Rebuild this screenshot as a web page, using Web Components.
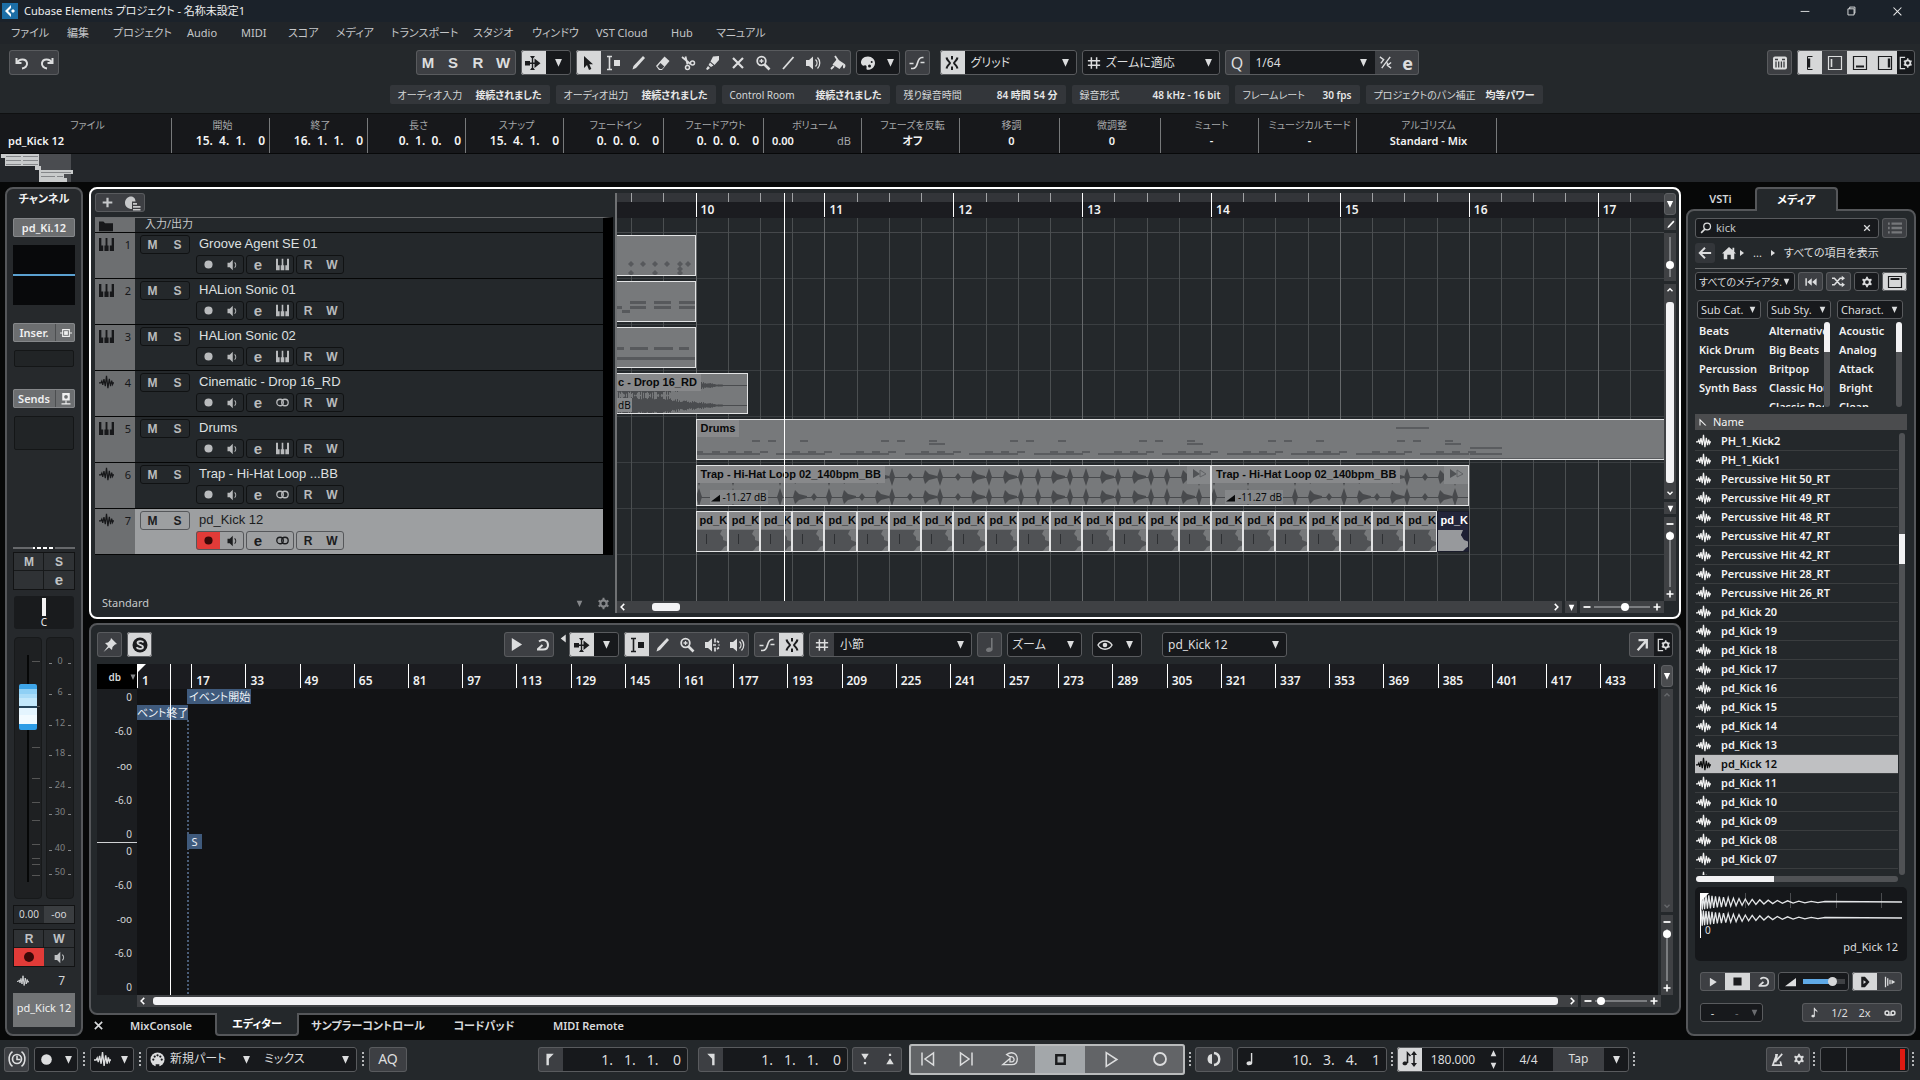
<!DOCTYPE html>
<html lang="ja">
<head>
<meta charset="utf-8">
<title>Cubase Elements プロジェクト - 名称未設定1</title>
<style>
  body {
    margin: 0;
    background: #070808;
    color: #d4d6d8;
    font: 12px/16px "Noto Sans", "Noto Sans CJK JP", sans-serif;
    font-feature-settings: "palt";
  }
</style>
</head>
<body>
<cb-app></cb-app>

<script>
/* Shared by every shadow root */
const BASE = `
  *, *::before, *::after { box-sizing: border-box; }
  :host([hidden]) { display: none; }
  button, input, select { font: inherit; font-feature-settings: inherit; color: inherit; margin: 0; padding: 0; border: 0; background: none; border-radius: 0; }
  button { display: inline-flex; align-items: center; justify-content: center; cursor: default; }
  svg { display: block; flex: none; }
`;

const s = (d, w = 2) => `<path d="${d}" fill="none" stroke="currentColor" stroke-width="${w}"/>`;
const f = (d) => `<path d="${d}" fill="currentColor"/>`;

/* All icons are drawn on a 16 x 16 grid */
const ICONS = {
  logo: `<rect width="16" height="16" fill="#1c6ea6"/><path d="M9 2 3 8l6 6V11L6 8l3-3z" fill="#fff"/><path d="m11 6 2 2-2 2-2-2z" fill="#fff"/>`,
  min: s('M3 8.5h10', 1),
  restore: s('M4.5 5.5h7v7h-7zM6.500 5.500v-2h6v7h-1', 1),
  close: s('m4 4 9 9M13 4l-9 9', 1.2),
  undo: s('M2.500 3v5h5M3 8C5 3.500 12 3 13 8c.5 3-2 5-5 5.500'),
  redo: s('M13.500 3v5h-5M13 8C11 3.500 4 3 3 8c-.5 3 2 5 5 5.500'),
  scroll: f('M0 6h5v4.500H0zM9.500 3.500l6 4.700-6 4.700zM5 1h5l-1.500 2h-2zM5 15h5l-1.500-2h-2z') + s('M7.500 2v12', 1.4) + s('M5 8.200h6', 1.6),
  pointer: f('M4 1v12l3-3 2 5 2.400-1L9.300 9.300H13z'),
  range: s('M2 1.500h5M2 14.500h5M4.500 1.500v13', 1.600) + f('M9 5h6v6H9z'),
  pencil: f('m13 1 2 2-9 10-3.500 1.500L3.500 11z'),
  eraser: f('m9.500 1.500 5 4.500-7.500 9H4L1 11z') + `<path d="m5.500 8 3.800 3.500-2.300 2.500H5L2.500 11.500z" fill="#3d3f43"/>`,
  scissors: s('m2 2 8.500 7M5.500 1.500l2 8', 1.800) + `<circle cx="12.500" cy="8" r="2" fill="none" stroke="currentColor" stroke-width="1.500"/><circle cx="7.500" cy="12.500" r="2" fill="none" stroke="currentColor" stroke-width="1.500"/>`,
  glue: f('M8 1.500 14 1v4l-4.500 5-4-3.500zM5 7.500l3.500 3L6 12l-2.500-2zM3 11l2 2-2.500 2L1 14z'),
  cross: s('m3 3 10 10M13 3 3 13', 2.200),
  zoom: `<circle cx="6.500" cy="6" r="4.300" fill="none" stroke="currentColor" stroke-width="1.800"/>` + s('m9.500 9.500 5 5', 2.600) + s('M4.500 6h4M6.500 4v4', 1.300),
  line: s('M3 14 13.500 2', 1.800),
  speaker: f('M1 5h3l4-3.500v13L4 11H1z') + s('M10.500 4.500c2 2 2 5 0 7M12.500 2.500c3 3 3 8 0 11', 1.300),
  audition: f('M1 5h3l4-3.500v13L4 11H1z') + s('M11 1.500v4M11 10.500v4M9 8h3M13 4l2 1.500M13 12l2-1.500M14.500 8h1', 1.700),
  bucket: f('m7 4 7 4.500-4.500 5.500-7-4.500zM13.500 8.500c2.500 0 2.500 4 .5 5-1.500 0-1-3-.5-5z') + s('m5 1 4 6M1 14l3-3', 1.800),
  palette: f('M8 1.500C3 1.500 1 5 1 7.500S3 11 4.500 10.500 7 11 6.500 13 8 15 10 14.500s5-3 5-6.500-3-6.500-7-6.500z') + `<circle cx="9.500" cy="11" r="1.500" fill="#17191c"/><circle cx="11.700" cy="7" r="1" fill="#17191c"/>`,
  curve: s('M2 13.500h2c6 0 3-11 9-11h1.500M.500 8.500h4M11.500 7.500h4', 1.700),
  snap: s('M8 1v3.500M8 11.500V15', 2) + s('M2.500 2.500c.5 3 3 4 3.500 5.500-.5 1.500-3 2.500-3.500 5.500M13.500 2.500c-.5 3-3 4-3.500 5.500.5 1.500 3 2.500 3.500 5.500', 2),
  grid: s('M1 5.500h14M1 10.500h14M5 1.500v13M11 1.500v13', 1.700),
  down: f('M3 3h10L8 14z'),
  up: f('M3 13h10L8 2z'),
  right: f('M4 2v12l8-6z'),
  left: f('M12 1v14L3 8z'),
  chevUp: s('m4 10 4-4 4 4', 2.200),
  chevDown: s('m4 6 4 4 4-4', 2.200),
  chevLeft: s('m10 3-5 5 5 5', 2.400),
  chevRight: s('m6 3 5 5-5 5', 2.400),
  minus: s('M1 8h14', 3.500),
  plus: s('M1 8h14M8 1v14', 3.200),
  slash: s('m2 2 4 3-3 4M13 2 4 14M10 8v3l4 3M14 8l-4 3', 1.500),
  rack: `<rect x="1" y="1.500" width="14" height="13" rx="2" fill="currentColor"/><path d="M4 6.500v6M6.700 6.500v6M9.400 6.500v6M12 6.500v6M3 4.500h3M10 4.500h3" stroke="#3d3f43" stroke-width="1.300"/>`,
  paneL: s('M10.500 1.500h-5v13h5', 1) + s('M7 3.500v9', 2.400),
  paneL2: s('M1.500 1.500h13v13h-13z', 1.200) + s('M4.500 4v8', 1.600),
  paneB: s('M1.500 1.500h13v13h-13z', 1.200) + s('M4 11.500h8', 2.200),
  paneR: s('M1.500 1.500h13v13h-13z', 1.200) + s('M12 3.500v9', 2.400),
  setup: s('M7 1.500H1.500v13H7', 1.400) + `<circle cx="10" cy="8" r="3" fill="none" stroke="currentColor" stroke-width="2"/>` + s('M10 2.500v2M10 11.500v2M5.500 5.500l2 1M12.500 9.500l2 1M14.500 5.500l-2 1M7.500 9.500l-2 1', 1.600),
  gear: `<circle cx="8" cy="8" r="3.800" fill="none" stroke="currentColor" stroke-width="2.600"/>` + s('M8 1v3M8 12v3M2 4.500l2.500 1.500M11.500 10l2.500 1.500M14 4.500 11.500 6M4.500 10 2 11.500', 2.400),
  folder: f('M0 4h5l2 2h9v9H0z'),
  keys: f('M0 1h2.500v8H4.500v6H0zM7 1h2v8h1.200v6H5.800V9H7zM13.500 1H16v14h-4.500V9h2z'),
  wave: s('M0 8.500h2l1-2 1 4 1.300-6 1.400 7.500L8 1l1.500 13L11 4l1.300 8 1.200-6 1 4 .500-1.500h1', 1.300),
  rec: `<circle cx="8" cy="8" r="5" fill="currentColor"/>`,
  mono: f('M2 5h3l4-4v14l-4-4H2z') + s('M11.500 4.500c2 2 2 5 0 7', 1.400),
  stereo: `<circle cx="5" cy="8" r="4" fill="none" stroke="currentColor" stroke-width="1.600"/><circle cx="11" cy="8" r="4" fill="none" stroke="currentColor" stroke-width="1.600"/>`,
  preset: f('M0 8c0-4 3-6.500 6-6.500 3 0 4.500 2.500 4.500 5H7V14C3 14 0 11.500 0 8zM8 8h4v1.800H8zM8 11h7.500v1.800H8zM8 14h7.500v1.500H8z'),
  insert: s('M3.500 3.500h9v9h-9zM0 8h3M13 8h3', 1.400) + f('M5.500 5.500h5v5h-5z'),
  send: f('M3 0h10v10H3z') + s('M8 10v4M2 14.500h12', 1.500) + `<circle cx="8" cy="5" r="2.500" fill="#6f7173"/>`,
  pin: f('m9 1 6 6-2 .5-2.500 2.500-.5 3L7 10.500 1.500 15 6 9 3 6l3-.5L8.500 3z'),
  solo: `<circle cx="8" cy="8" r="7.500" fill="currentColor"/><path d="M11.500 5.500C10 3.500 5.500 4 5.500 6s5.500 1.700 5.500 4-5 2.500-6.500.3" fill="none" stroke="#d6d7d8" stroke-width="1.800"/>`,
  play: f('M3 1v14L14 8z'),
  playOpen: s('M4 1.500v13L14 8z', 1.500),
  stop: f('M3 3h10v10H3z'),
  stopOpen: s('M3.500 3.500h9v9h-9z', 2.600),
  recOpen: `<circle cx="8" cy="8" r="6" fill="none" stroke="currentColor" stroke-width="1.800"/>`,
  loop: s('M5 4.500c4-3 9-1 9 3.500 0 3-2 4.500-5 4.500H3M8.500 8l-5 4.500', 2),
  loopOpen: s('M5 4c5-3.500 9.500-.5 9.500 4 0 3-2 5-5 5H1.500l6.500-5.500v3h1.500c3.500 0 2.500-5.500-1.500-4.500z', 1.200),
  prev: s('M2 1.500v13M13.500 2v12L5 8z', 1.500),
  next: s('M14 1.500v13M2.500 2v12L11 8z', 1.500),
  note: f('M9 1h1.600v11.500c0 3-6.600 3.500-6.600.5 0-2 3-3 5-2z'),
  note8: f('M7 1h1.500c.5 3 5 3 3.500 7-.5-2-2-2.500-3.500-3v8c0 3-5 2.500-5 .5 0-2 2-2.500 3.500-2z'),
  eye: s('M1 8c3-5.500 11-5.500 14 0-3 5.500-11 5.500-14 0z', 1.500) + `<circle cx="8" cy="8" r="2.300" fill="currentColor"/>`,
  open: s('M4 2.500h9.500V12M13 3 3 14', 2.600),
  search: `<circle cx="9.500" cy="6" r="4.500" fill="none" stroke="currentColor" stroke-width="1.700"/>` + s('m6.500 9.500-5 5', 2.200),
  x: s('m3.500 3.500 9 9M12.500 3.500l-9 9', 2),
  list: s('M4 3h12M4 8h12M4 13h12', 2.600) + s('M0 3h2M0 8h2M0 13h2', 2.600),
  back: s('M15 8H3M8 2 2 8l6 6', 2.200),
  home: f('M8 1 0 8.500h2V15h4v-5h4v5h4V8.500h2l-2-2V2h-2v2.500z'),
  rewind: s('M1.500 3v10', 2) + f('M9 3v10L3 8zM15.500 3v10L9.500 8z'),
  shuffle: s('M0 4h3l7 8h3M0 12h3l7-8h3', 2) + f('m12 1 4 3-4 3zM12 9l4 3-4 3z'),
  panel: s('M1.500 2.500h13v11h-13z', 1.200) + s('M3.500 5h9', 1.800),
  sort: f('M1 1v14h2V6l9 9h3z'),
  ramp: f('M0 15h16V3z'),
  auto: f('M3 1h5l6 7-6 7H3z') + `<path d="M6 5.500v5L9.500 8z" fill="#d6d7d8"/>`,
  beat: s('M2 1v14M5 3v10M8 5v6', 1.700) + f('M10 5v6l5-3z'),
  tape: `<circle cx="4" cy="8" r="2.600" fill="none" stroke="currentColor" stroke-width="2"/><circle cx="12" cy="8" r="2.600" fill="none" stroke="currentColor" stroke-width="2"/>` + s('M4 10.500h8', 2),
  metro: s('M5.500 3h2L6 11M7 3 3 14h9l-1-4M6 10l7-8', 1.800),
  clock: `<circle cx="8" cy="8" r="4" fill="none" stroke="currentColor" stroke-width="1.500"/>` + s('M8 5v3.500h3M4 1.500c-4 3-4 10 0 13M12 1.500c4 3 4 10 0 13', 1.400),
  midi: `<circle cx="8" cy="8" r="7.500" fill="currentColor"/><g fill="#17191c"><circle cx="3.500" cy="8" r="1.200"/><circle cx="5" cy="4.800" r="1.200"/><circle cx="8" cy="3.500" r="1.200"/><circle cx="11" cy="4.800" r="1.200"/><circle cx="12.500" cy="8" r="1.200"/><path d="M6 13h4v3H6z"/></g>`,
  locL: f('M3 1h9L6 7v8H3z'),
  locR: f('M13 1H4l6 6v8h3z'),
  markL: f('M3 1h10L8 9zM6.500 12h3v3h-3z'),
  markR: f('M3 15h10L8 7zM6.500 1h3v3h-3z'),
  sync: f('M6 3v10c-6 0-6-10 0-10z') + s('M8 2c7 1 7 11 0 12', 2.400),
  tempo: s('M5.500 12V2l3 3M12 3v11', 1.600) + f('M5.500 12c0 3-5 3-5 .5S4 10 5.500 11zM12 0l3 4H9zM12 16l3-4H9z')
};

const icon = (name, size = 16) =>
  `<svg width="${size}" height="${size}" viewBox="0 0 16 16" aria-hidden="true">${ICONS[name]}</svg>`;

class Part extends HTMLElement {
  connectedCallback() {
    if (this.shadowRoot) return;
    this.attachShadow({ mode: 'open' });
    this.shadowRoot.innerHTML = `<style>${BASE}${this.css()}</style>${this.html()}`;
  }
  attr(name, fallback = '') { return this.getAttribute(name) ?? fallback; }
  css() { return ':host { display: block; }'; }
  html() { return '<slot></slot>'; }
}

// -- small controls --
class CbButton extends Part {
  css() {
    return `
      :host { display: flex; flex: none; width: ${this.attr('w', '25')}px; }
      button { flex: 1; color: inherit; min-width: 0; }
      :host([on]) button { background: var(--on-bg, #d6d7d8); color: #1b1c1e; }
      :host([dark]) button { background: #17191c; }
      :host([rec]) button { background: #e23b38; color: #3a0908; }
      :host([off]) button { color: #75777a; }
    `;
  }
  html() {
    const i = this.attr('icon');
    return `<button type="button" aria-label="${this.attr('label')}">${i ? icon(i, this.attr('size', '16')) : '<slot></slot>'}</button>`;
  }
}
customElements.define('cb-button', CbButton);

class CbGroup extends Part {
  css() {
    return `
      :host { display: flex; flex: none; align-items: stretch; height: var(--group-h, 25px); overflow: hidden;
        background: #3d3f43; border-radius: 3px; outline: 1px solid #595b5e; outline-offset: -1px; }
      :host([field]) { background: #17191c; }
    `;
  }
}
customElements.define('cb-group', CbGroup);

class CbSelect extends Part {
  css() {
    return `
      :host { display: grid; flex: none; width: ${this.attr('w', '100')}px; align-items: center; background: #17191c; min-width: 0; }
      :host([fill]) { width: auto; flex: 1; }
      select, svg { grid-area: 1 / 1; }
      select { appearance: none; width: 100%; min-width: 0; height: 100%; padding: 0 12px 0 ${this.attr('pad', '8')}px; }
      svg { justify-self: end; margin-right: ${this.attr('end', '6')}px; pointer-events: none; }
      :host([off]) { color: #6a6c6f; }
    `;
  }
  html() {
    const v = this.attr('value');
    return `<select aria-label="${this.attr('label')}"><option>${v}</option></select>${icon('down', this.attr('size', '11'))}`;
  }
}
customElements.define('cb-select', CbSelect);

class CbGrip extends Part {
  css() { return ':host { display: block; flex: none; width: 2px; height: 14px; background: repeating-linear-gradient(#b5b7b9 0 2px, transparent 2px 4px); }'; }
  html() { return ''; }
}
customElements.define('cb-grip', CbGrip);

class CbScroll extends Part {
  css() {
    const [a, b, c] = this.attr('parts', '0 1 0').split(' ');
    return `
      :host { display: flex; align-items: center; gap: 4px; background: #3f4144; color: #fff; min-width: 0; min-height: 0; height: 12px; }
      :host([vertical]) { flex-direction: column; height: auto; width: 12px; }
      :host([dim]) { color: #66686b; }
      .track { flex: 1; align-self: stretch; display: flex; flex-direction: inherit; padding: 2px 0; }
      :host([vertical]) .track { padding: 0 2px; }
      .track::before { content: ""; flex: ${a}; }
      .thumb { flex: ${b}; background: #f2f2f4; border-radius: 3px; }
      .track::after { content: ""; flex: ${c}; }
      :host([dim]) .thumb { visibility: hidden; }
      button { width: 12px; height: 12px; }
    `;
  }
  html() {
    const v = this.hasAttribute('vertical');
    return `
      <button type="button" aria-label="戻る">${icon(v ? 'chevUp' : 'chevLeft', 10)}</button>
      <div class="track"><div class="thumb"></div></div>
      <button type="button" aria-label="進む">${icon(v ? 'chevDown' : 'chevRight', 10)}</button>`;
  }
}
customElements.define('cb-scroll', CbScroll);

class CbZoom extends Part {
  css() {
    return `
      :host { display: flex; align-items: center; justify-content: space-between; gap: 2px; padding: 0 2px; width: 84px; height: 12px; background: #3f4144; color: #fff; }
      :host([vertical]) { flex-direction: column; width: 12px; height: 84px; padding: 2px 0; }
      :host([bare]) { height: 48px; padding: 4px 0; }
      :host([bare]) button { display: none; }
      button { width: 10px; height: 10px; }
      input { appearance: none; flex: 1; min-width: 0; min-height: 0; width: 100%; height: 8px; }
      :host([vertical]) input { writing-mode: vertical-lr; width: 8px; height: 100%; }
      input::-webkit-slider-runnable-track { background: linear-gradient(#7b7d80, #7b7d80) center / 100% 2px no-repeat; }
      :host([vertical]) input::-webkit-slider-runnable-track { background-size: 2px 100%; }
      input::-webkit-slider-thumb { appearance: none; width: 8px; height: 8px; border-radius: 50%; background: #fff; }
    `;
  }
  html() {
    return `
      <button type="button" aria-label="縮小">${icon('minus', 8)}</button>
      <input type="range" aria-label="${this.attr('label', 'ズーム')}" min="0" max="100" value="${this.attr('value', '50')}">
      <button type="button" aria-label="拡大">${icon('plus', 8)}</button>`;
  }
}
customElements.define('cb-zoom', CbZoom);

// -- window header --
class CbTitle extends Part {
  css() {
    return `
      :host { display: flex; align-items: center; height: 22px; padding-left: 2px; background: #1b222a; color: #eceded; font-size: 11px; }
      h1 { flex: 1; margin: 0 0 0 6px; font: inherit; }
      button { width: 46px; height: 22px; }
    `;
  }
  html() {
    return `${icon('logo')}<h1>Cubase Elements プロジェクト - 名称未設定1</h1>
      <button type="button" aria-label="最小化">${icon('min', 14)}</button>
      <button type="button" aria-label="元に戻す">${icon('restore', 14)}</button>
      <button type="button" aria-label="閉じる">${icon('close', 14)}</button>`;
  }
}
customElements.define('cb-title', CbTitle);

class CbMenu extends Part {
  css() {
    return `
      :host { display: block; background: #212529; }
      nav { display: grid; grid-template-columns: 56px 46px 74px 54px 47px 48px 55px 82px 59px 64px 75px 45px auto; align-items: center; height: 22px; padding-left: 11px; font-size: 11px; }
      a { color: #c4c6c8; text-decoration: none; white-space: nowrap; }
    `;
  }
  html() {
    const items = ['ファイル', '編集', 'プロジェクト', 'Audio', 'MIDI', 'スコア', 'メディア', 'トランスポート', 'スタジオ', 'ウィンドウ', 'VST Cloud', 'Hub', 'マニュアル'];
    return `<nav>${items.map((t) => `<a href="#">${t}</a>`).join('')}</nav>`;
  }
}
customElements.define('cb-menu', CbMenu);

class CbToolbar extends Part {
  css() {
    return `
      :host { display: flex; justify-content: space-between; align-items: center; height: 37px; padding: 0 5px 0 9px; background: #24282b; color: #dcddde; }
      .mid, .end { display: flex; gap: 5px; }
      .mid { margin-left: 8px; }
      .letters { font: 700 15px/25px "Liberation Sans", sans-serif; }
      .snap { margin-left: 5px; }
      .q { font-size: 16px; }
      b { font-size: 18px; }
    `;
  }
  html() {
    const tools = [['range', '範囲選択'], ['pencil', '鉛筆'], ['eraser', '消しゴム'], ['scissors', 'はさみ'], ['glue', 'のり'], ['cross', 'ミュート'], ['zoom', 'ズーム'], ['line', 'ライン'], ['speaker', '再生'], ['bucket', 'カラー']];
    return `
      <cb-group><cb-button icon="undo" label="元に戻す"></cb-button><cb-button icon="redo" label="再実行"></cb-button></cb-group>
      <div class="mid">
        <cb-group class="letters">${['M', 'S', 'R', 'W'].map((t) => `<cb-button label="${t}">${t}</cb-button>`).join('')}</cb-group>
        <cb-group><cb-button on icon="scroll" label="自動スクロール"></cb-button><cb-button dark icon="down" size="11" label="スクロール設定"></cb-button></cb-group>
        <cb-group><cb-button on icon="pointer" label="オブジェクトの選択"></cb-button>${tools.map(([i, l]) => `<cb-button icon="${i}" label="${l}"></cb-button>`).join('')}</cb-group>
        <cb-group field><cb-button icon="palette" label="カラーツール"></cb-button><cb-button w="19" icon="down" size="11" label="カラー一覧"></cb-button></cb-group>
        <cb-group><cb-button icon="curve" label="クロスフェード"></cb-button></cb-group>
        <cb-group field class="snap"><cb-button on icon="snap" label="スナップ"></cb-button><cb-select w="112" pad="6" value="グリッド" label="スナップタイプ"></cb-select></cb-group>
        <cb-group field><cb-button w="24" icon="grid" size="14" label="グリッド"></cb-button><cb-select w="114" pad="0" value="ズームに適応" label="グリッドタイプ"></cb-select></cb-group>
        <cb-group><cb-button class="q" label="クオンタイズ">Q</cb-button><cb-select w="125" pad="6" value="1/64" label="クオンタイズ値"></cb-select><cb-button w="22" icon="slash" size="15" label="ソフトクオンタイズ"></cb-button><cb-button w="22" label="クオンタイズパネル"><b>e</b></cb-button></cb-group>
      </div>
      <div class="end">
        <cb-group><cb-button icon="rack" label="インストゥルメント"></cb-button></cb-group>
        <cb-group><cb-button on icon="paneL" label="インスペクター"></cb-button><cb-button icon="paneL2" label="左ゾーン"></cb-button><cb-button on icon="paneB" label="下ゾーン"></cb-button><cb-button on icon="paneR" label="右ゾーン"></cb-button><cb-button dark w="18" icon="setup" size="14" label="レイアウト設定"></cb-button></cb-group>
      </div>`;
  }
}
customElements.define('cb-toolbar', CbToolbar);

class CbStatus extends Part {
  css() {
    return `
      :host { display: grid; grid-template-columns: 160px 160px 168px 170px 157px 125px 177px; gap: 6px; justify-content: center;
        padding: 4px 0 9px 12px; background: #24282b; font-size: 10px; }
      div { display: flex; justify-content: space-between; align-items: center; height: 19px; padding: 0 8px; background: #33363a; border-radius: 2px; white-space: nowrap; }
      b { font-weight: 600; color: #e6e7e8; }
    `;
  }
  html() {
    const rows = [['オーディオ入力', '接続されました'], ['オーディオ出力', '接続されました'], ['Control Room', '接続されました'], ['残り録音時間', '84 時間 54 分'], ['録音形式', '48 kHz - 16 bit'], ['フレームレート', '30 fps'], ['プロジェクトのパン補正', '均等パワー']];
    return rows.map(([k, v]) => `<div><span>${k}</span><b>${v}</b></div>`).join('');
  }
}
customElements.define('cb-status', CbStatus);

class CbInfo extends Part {
  css() {
    return `
      :host { display: flex; height: 41px; padding-top: 4px; background: #17181b; border-top: 1px solid #0f1011; border-bottom: 1px solid #08090a; }
      dl { margin: 0; height: 35px; padding: 0 4px 0 8px; border-right: 1px solid #77797b; text-align: center; white-space: pre; }
      dt { font-size: 10px; line-height: 14px; color: #a5a7a9; }
      dd { margin: 0; font-size: 11px; font-weight: 600; line-height: 18px; color: #f4f4f4; }
      .pos dd { font-size: 12px; text-align: right; }
      .file dd { text-align: left; }
      .vol dd { display: flex; justify-content: space-between; padding-right: 6px; }
      .vol span { color: #a5a7a9; font-weight: 400; }
    `;
  }
  html() {
    const cells = [
      ['ファイル', 'pd_Kick 12', 172, 'file'], ['開始', '15.  4.  1.    0', 98, 'pos'], ['終了', '16.  1.  1.    0', 98, 'pos'],
      ['長さ', '0.  1.  0.    0', 98, 'pos'], ['スナップ', '15.  4.  1.    0', 98, 'pos'], ['フェードイン', '0.  0.  0.    0', 100, 'pos'],
      ['フェードアウト', '0.  0.  0.    0', 100, 'pos'], ['ボリューム', '0.00<span>dB</span>', 98, 'vol'], ['フェーズを反転', 'オフ', 98, ''],
      ['移調', '0', 100, ''], ['微調整', '0', 101, ''], ['ミュート', '-', 98, ''], ['ミュージカルモード', '-', 98, ''], ['アルゴリズム', 'Standard - Mix', 140, '']
    ];
    return cells.map(([k, v, w, c]) => `<dl class="${c}" style="width:${w}px"><dt>${k}</dt><dd>${v}</dd></dl>`).join('');
  }
}
customElements.define('cb-info', CbInfo);

class CbOverview extends Part {
  css() { return ':host { display: block; height: 28px; background: #24272b; }'; }
  html() {
    return `<svg width="80" height="28" aria-hidden="true">
      <rect x="39" width="32" height="28" fill="#4a4c50"/>
      <g fill="#c9cbcc">
        <rect x="1" y="0" width="38" height="4"/><rect x="5" y="4" width="34" height="8"/><rect x="35" y="12" width="6" height="4"/>
        <rect x="39" y="16" width="34" height="4"/><rect x="39" y="20" width="25" height="4"/><rect x="39" y="24" width="28" height="4"/>
      </g>
      <path d="M6 2.500h15m2 0h15M6 6.500h15m2 0h15M6 10.500h15m2 0h15M41 18.500h30M41 22.500h14m2 0h6" stroke="#85878a" fill="none"/>
    </svg>`;
  }
}
customElements.define('cb-overview', CbOverview);

// -- channel strip --
class CbChannel extends Part {
  css() {
    return `
      :host { display: flex; flex-direction: column; padding: 0 6px 7px; background: #26292c; border: 2px solid #55575a; border-radius: 8px; }
      h2 { margin: 0; font-size: 11px; line-height: 20px; text-align: center; color: #f2f2f2; white-space: nowrap; }
      .chip { display: flex; align-items: stretch; height: 19px; background: #6c6e70; outline: 1px solid #85878a; outline-offset: -1px; border-radius: 2px; font-size: 11px; font-weight: 600; color: #f0f0f0; }
      .chip button:first-child { flex: 1; }
      .chip button + button { width: 20px; border-left: 1px solid #4c4e50; }
      .name { margin-top: 9px; }
      .eq { height: 60px; margin-top: 8px; background: linear-gradient(#5aa0d0, #5aa0d0) 0 50% / 100% 2px no-repeat #08090b; }
      .ins { margin-top: 18px; }
      .snd { margin-top: 22px; }
      .slot { height: 17px; margin: 8px 1px 0; background: #212426; border: 1px solid #141617; border-radius: 2px; }
      .tall { height: 34px; }
      .split { margin-top: auto; height: 2px; background: linear-gradient(90deg, #66686b 20px, transparent 20px 42px, #66686b 42px), repeating-linear-gradient(90deg, #fff 0 4px, transparent 4px 6px); }
      .pads { display: grid; grid-template-columns: 1fr 1fr; grid-auto-rows: 18px; margin-top: 3px; font: 700 12px/18px "Liberation Sans", sans-serif; color: #c0c2c4; background: linear-gradient(90deg, transparent 29px, #17191a 29px 30px, transparent 30px), linear-gradient(#17191a, #17191a) 0 17px / 100% 1px no-repeat, #2f3235; border: 1px solid #121314; }
      .pads > * { width: auto; }
      .pads b { font-size: 15px; }
      .pan { display: flex; flex-direction: column; align-items: center; height: 33px; margin: 6px 1px 0; padding-top: 2px; background: #191b1d; border-radius: 3px; font-size: 10px; line-height: 12px; color: #eee; }
      .pan i { width: 4px; height: 18px; background: #f2f2f2; }
      .fader { display: grid; grid-template-columns: 28px 28px; gap: 4px; margin: 8px 1px 0; height: 262px; }
      .fader > div { display: grid; background: #1e2022; border: 1px solid #17191a; border-radius: 4px; }
      .fader svg, .fader input { grid-area: 1 / 1; }
      .fader svg { margin: -1px; }
      text { font-size: 9px; fill: #808284; text-anchor: middle; }
      input { appearance: none; writing-mode: vertical-lr; direction: rtl; width: 26px; height: 260px; }
      input::-webkit-slider-thumb { appearance: none; width: 18px; height: 46px; border-radius: 2px;
        background: linear-gradient(#3ea5e8 0 5px, #8fd0f5 5px 10px, #a9dcf8 10px 14px, #c3e8fb 14px 22px, #27465c 22px 24px, #e4f5fe 24px 31px, #f2fbff 31px 40px, #2e9de6 40px); }
      .vals { display: flex; height: 19px; margin-top: 6px; border: 1px solid #121314; font-size: 10px; line-height: 17px; text-align: center; }
      .vals span { flex: 1; }
      .vals span + span { background: #3a3d40; }
      .rw { margin-top: 5px; }
      .id { display: flex; align-items: center; justify-content: space-between; height: 20px; margin-top: 4px; padding: 0 10px 0 4px; }
      .foot { height: 34px; margin-top: 2px; background: #727476; text-align: center; font-size: 11px; line-height: 30px; color: #f0f0f0; white-space: nowrap; }
    `;
  }
  html() {
    const scale = [[0, 24], [6, 55], [12, 86], [18, 116], [24, 148], [30, 175], [40, 211], [50, 235]];
    return `
      <h2>チャンネル</h2>
      <div class="chip name"><button type="button">pd_Ki.12</button></div>
      <div class="eq"></div>
      <div class="chip ins"><button type="button">Inser.</button><button type="button" aria-label="インサートバイパス">${icon('insert', 12)}</button></div>
      <div class="slot"></div>
      <div class="chip snd"><button type="button">Sends</button><button type="button" aria-label="センドバイパス">${icon('send', 12)}</button></div>
      <div class="slot tall"></div>
      <div class="split"></div>
      <div class="pads"><cb-button label="ミュート">M</cb-button><cb-button label="ソロ">S</cb-button><span></span><cb-button label="チャンネル設定の編集"><b>e</b></cb-button></div>
      <div class="pan"><i></i>C</div>
      <div class="fader">
        <div>
          <svg width="28" height="262" aria-hidden="true"><path d="M14 18v227" stroke="#060707" stroke-width="2"/><path d="M18 24.500h8m-8 45h8m-8 41h8m-8 31h8m-8 24h8m-8 18h8m-8 24h8m-8 14h8m-8 6h8m-8 11h8" stroke="#555"/></svg>
          <input type="range" min="0" max="1000" value="785" aria-label="ボリュームフェーダー">
        </div>
        <div><svg width="28" height="262">${scale.map(([t, y]) => `<text x="14" y="${y + 3}">${t}</text><path d="M3 ${y + 2}.5h3m16 0h3" stroke="#808284"/>`).join('')}</svg></div>
      </div>
      <div class="vals"><span>0.00</span><span>-oo</span></div>
      <div class="pads rw"><cb-button label="オートメーション読み込み">R</cb-button><cb-button label="オートメーション書き込み">W</cb-button><cb-button rec icon="rec" label="録音可能"></cb-button><cb-button icon="mono" size="13" label="モニタリング"></cb-button></div>
      <div class="id">${icon('wave', 12)}<span>7</span></div>
      <div class="foot">pd_Kick 12</div>`;
  }
}
customElements.define('cb-channel', CbChannel);

// -- track list --
class CbTrack extends Part {
  css() {
    return `
      :host { display: grid; grid-template-columns: 40px 1fr; height: 46px; border-bottom: 1px solid #050606; background: #24282b; --group-h: 19px; }
      .head { display: flex; justify-content: space-between; padding: 4px 4px 0; background: #6d6f71; color: #17181a; font-size: 11px; }
      .body { display: grid; grid-template-columns: 56px 1fr; grid-template-rows: 21px 19px; padding-left: 5px; color: #b9bbbd; font: 700 12px/18px "Liberation Sans", sans-serif; }
      .name { font: 13px/21px "Liberation Sans", sans-serif; color: #dfe0e1; padding-left: 3px; }
      .row { grid-column: 2; display: flex; gap: 2px; margin-top: 1px; }
      cb-group { background: none; outline-color: #101213; }
      .ms { margin: 2px 0 0; width: 50px; }
      b { font-size: 15px; }
      :host([selected]) .body { background: #9d9fa1; color: #1b1c1e; }
      :host([selected]) .name { color: #1b1c1e; }
      :host([selected]) cb-group { outline-color: #55575a; }
    `;
  }
  html() {
    const audio = this.attr('kind') === 'audio';
    const sel = this.hasAttribute('selected');
    return `
      <div class="head">${icon(audio ? 'wave' : 'keys', 15)}<span>${this.attr('num')}</span></div>
      <div class="body">
        <cb-group class="ms"><cb-button label="ミュート">M</cb-button><cb-button label="ソロ">S</cb-button></cb-group>
        <div class="name"><slot></slot></div>
        <div class="row">
          <cb-group><cb-button w="24" ${sel ? 'rec' : ''} icon="rec" size="13" label="録音可能"></cb-button><cb-button w="24" icon="mono" size="12" label="モニタリング"></cb-button></cb-group>
          <cb-group><cb-button w="24" label="チャンネル設定の編集"><b>e</b></cb-button><cb-button w="24" icon="${audio ? 'stereo' : 'keys'}" size="13" label="${audio ? 'チャンネル構成' : 'インストゥルメントの編集'}"></cb-button></cb-group>
          <cb-group><cb-button w="24" label="オートメーション読み込み">R</cb-button><cb-button w="24" label="オートメーション書き込み">W</cb-button></cb-group>
        </div>
      </div>`;
  }
}
customElements.define('cb-track', CbTrack);

class CbTracks extends Part {
  css() {
    return `
      :host { display: flex; flex-direction: column; padding-left: 4px; color: #c6c8ca; }
      .add { height: 24px; --group-h: 19px; display: flex; }
      .rows { margin-right: 2px; border-top: 1px solid #6a6c6e; border-right: 10px solid #000; }
      .folder { display: grid; grid-template-columns: 40px 1fr; height: 15px; overflow: hidden; border-bottom: 1px solid #050606; font-size: 11px; line-height: 11px; }
      .folder i { padding: 0 4px; background: #6d6f71; color: #17181a; }
      .folder span { padding-left: 10px; }
      .foot { display: flex; align-items: center; gap: 13px; margin-top: auto; height: 20px; padding: 0 5px 0 7px; font-size: 11px; }
      .foot span { flex: 1; }
      .foot svg { color: #85878a; }
    `;
  }
  html() {
    const tracks = [['midi', 'Groove Agent SE 01'], ['midi', 'HALion Sonic 01'], ['midi', 'HALion Sonic 02'], ['audio', 'Cinematic - Drop 16_RD'], ['midi', 'Drums'], ['audio', 'Trap - Hi-Hat Loop ...BB'], ['audio', 'pd_Kick 12']];
    return `
      <div class="add"><cb-group><cb-button icon="plus" size="11" label="トラックを追加"></cb-button><cb-button icon="preset" label="トラックプリセット"></cb-button></cb-group></div>
      <div class="rows">
        <div class="folder"><i>${icon('folder', 14)}</i><span>入力/出力</span></div>
        ${tracks.map(([k, n], i) => `<cb-track kind="${k}" num="${i + 1}" ${i === 6 ? 'selected' : ''}>${n}</cb-track>`).join('')}
      </div>
      <div class="foot"><span>Standard</span>${icon('down', 9)}${icon('gear', 13)}</div>`;
  }
}
customElements.define('cb-tracks', CbTracks);

// -- event display --
const FIRST_BAR = 9.390;
const BARS = 8.125;
const barX = (bar) => `${((bar - FIRST_BAR) / BARS * 100).toFixed(3)}%`;
const barW = (len) => `${(len / BARS * 100).toFixed(3)}%`;

const rects = (list, h = 2) => list.map(([x, y, w]) => `<rect x="${x}" y="${y}" width="${w}" height="${h}"/>`).join('');

// hi-hat hits: position, kind
const HATS = [[2, 's'], [36, 's'], [67, 'm'], [83, 's'], [98, 't'], [117, 'm'], [132, 's'], [147, 't'], [165, 'm'], [180, 't'], [195, 's'], [213, 'm'], [228, 't'], [243, 's'], [261, 'm'], [276, 't'], [292, 's'], [308, 't'], [324, 's'], [341, 's'], [356, 't'], [373, 's'], [389, 's'], [405, 't'], [421, 's'], [437, 't'], [454, 's'], [470, 's'], [486, 't'], [502, 's']];

function hatWave(width) {
  let d = '';
  for (const cy of [11, 31]) {
    for (const [x, kind] of HATS) {
      if (x > width - 4) continue;
      const a = kind === 's' ? 9 : 4;
      d += kind === 't'
        ? `M${x - 2} ${cy}l2 -7l4 4l8 2v2l-8 2l-4 4z`
        : `M${x - 3} ${cy}l3 -${a}l3 ${a}l-3 ${a}z`;
    }
  }
  return `<path d="${d}" fill="#484a4d"/><path d="M0 11.5H${width}M0 31.5H${width}" stroke="#484a4d"/>
    <rect x="${width - 24}" width="24" height="18" fill="#858789"/><path d="M${width - 18} 3v9l7-4z" fill="#505255"/><path d="M${width - 11} 4v7l6-3z" fill="none" stroke="#606265"/>`;
}

function boomWave() {
  let d = '';
  for (const cy of [11, 31]) {
    for (let x = 0; x < 106; x++) {
      const env = x < 46 ? 11 : x < 60 ? 11 - (x - 46) * 0.4 : Math.max(0.6, 6 - (x - 60) * 0.12 - (x > 98 ? 2 : 0));
      const a = env * (0.5 + 0.5 * Math.abs(Math.sin(x * 1.7) * Math.cos(x * 0.37)));
      d += `M${x}.5 ${(cy - a).toFixed(1)}V${(cy + a + 1).toFixed(1)}`;
    }
  }
  return `<path d="${d}M0 11.5H130M0 31.5H130" stroke="#4a4c4f" fill="none"/>`;
}

function drumNotes() {
  const n = [[0, 31, 6], [0, 33, 63], [15, 31, 8], [31, 31, 8], [47, 31, 8], [63, 31, 8]];
  for (let k = 0; k < 11; k++) {
    const x = 79 + Math.round(k * 64.4);
    n.push([x, 33, 49], [x + 16, 31, 8], [x + 32, 31, 8], [x + 48, 31, 8]);
  }
  for (let b = 0; b < 6; b++) {
    const x = Math.round(b * 128.9);
    n.push([x + 55, 20, 8], [x + 71, 20, 8], [x + 103, 20, 8]);
    if (b % 2) n.push([x + 103, 23, 16]);
  }
  n.push([699, 7, 33], [773, 27, 32], [773, 33, 32], [773, 38, 193]);
  return rects(n);
}

class CbClip extends Part {
  css() {
    return `
      :host { position: absolute; height: 41px; overflow: hidden; background: #77797b; border: 1px solid #e2e3e4; color: #08090a; }
      :host([open-left]) { border-left: 0; }
      :host([open-right]) { border-right: 0; }
      svg { position: absolute; left: 0; top: 0; }
      .name { position: relative; display: inline-block; height: 17px; padding: 0 4px; background: #88898b; font: 700 11px/17px "Liberation Sans", sans-serif; white-space: nowrap; }
      .gain { position: absolute; left: 13px; top: 24px; display: flex; align-items: center; gap: 3px; padding: 0 1px; background: #858789; font: 10px/14px "Noto Sans", sans-serif; }
      .gain svg { position: static; }
      :host([open-left]) .name { padding-left: 1px; }
      :host([open-left]) .gain { left: 0; }
      :host([short]) .name { padding: 0 0 0 3px; width: 100%; }
      :host([selected]) { background: #23253a; border-color: #1a1c2a; }
      :host([selected]) .name { background: none; color: #fff; }
    `;
  }
  html() {
    const kind = this.attr('kind');
    const name = this.attr('name');
    const db = this.attr('gain');
    const draw = {
      groove: () => `<g fill="#57595c">${[[14, 28], [26, 28], [38, 28], [50, 28], [63, 28], [71, 28], [14, 37], [38, 37], [63, 33], [63, 37]].map(([x, y]) => `<path d="m${x} ${y - 3} 3 3-3 3-3-3z"/>`).join('')}</g>`,
      chords: () => `<g fill="#57595c">${rects([[0, 24, 5], [5, 28, 8], [13, 19, 16], [13, 24, 16], [37, 19, 17], [37, 24, 17], [62, 19, 16], [62, 24, 16]], 3)}</g>`,
      bass: () => `<g fill="#57595c">${rects([[0, 19, 7], [13, 19, 18], [37, 19, 19], [62, 19, 10], [0, 29, 78]], 3)}</g>`,
      boom: () => boomWave(),
      drums: () => `<g fill="#5a5c5f">${drumNotes()}</g>`,
      hats: () => hatWave(Number(this.attr('px'))),
      kick: () => this.hasAttribute('selected')
        ? `<path d="M0 18h26l-3 5 3 5 5 2v12H0z" fill="#97999c"/><path d="M31 18h-6l-2 5 3 4 5 2zM31 34l-3 2-3 3v3h6z" fill="#1d1f33"/>`
        : `<path d="M0 18h25l-2 4 3 3v3l5 2v3l-4 2-2 3-3 2v1H0z" fill="#505255"/><path d="M9.500 22v10" stroke="#2e3033"/>`
    }[kind];
    return `<svg width="${kind === 'drums' ? 968 : 520}" height="41" aria-hidden="true">${draw()}</svg>
      ${name ? `<span class="name">${name}</span>` : ''}
      ${db ? `<span class="gain">${db === 'dB' ? '' : icon('ramp', 9)}${db}</span>` : ''}`;
  }
}
customElements.define('cb-clip', CbClip);

class CbArrange extends Part {
  css() {
    return `
      :host { display: grid; grid-template-rows: 25px 1fr; position: relative; overflow: hidden; }
      .ruler { position: relative; background: linear-gradient(#333539 9px, #1b1c20 9px); font-weight: 600; line-height: 15px; color: #f2f2f2; }
      .ruler i { position: absolute; top: 0; width: 1px; height: 9px; background: #a0a2a4; }
      .ruler i.bar { height: 24px; width: 1px; background: #fff; }
      .ruler span { position: absolute; top: 9px; padding-left: 5px; }
      .lanes { position: relative; background: linear-gradient(#45484b, #45484b) 0 14px / 100% 1px no-repeat, repeating-linear-gradient(transparent 0 45px, #3a3e41 45px 46px) 0 15px no-repeat #24282b; }
      .lanes::after { content: ""; position: absolute; inset: 338px 0 0; background: #24282b; z-index: 0; }
      .lanes > i { position: absolute; top: 0; bottom: 0; width: 1px; background: #4b4f51; z-index: 1; }
      .lanes > i.bar { background: #66696b; }
      cb-clip { z-index: 2; }
      .cursor { position: absolute; top: 0; bottom: 0; width: 1px; background: #fff; z-index: 3; }
    `;
  }
  html() {
    let ticks = '';
    let lines = '';
    for (let beat = 38; beat < 70; beat++) {
      const bar = beat / 4;
      const cls = beat % 4 ? '' : ' class="bar"';
      ticks += `<i${cls} style="left:${barX(bar)}"></i>`;
      if (!(beat % 4)) ticks += `<span style="left:${barX(bar)}">${bar}</span>`;
      lines += `<i${cls} style="left:${barX(bar)}"></i>`;
    }
    const clip = (row, from, to, attrs) => `<cb-clip style="left:${barX(from)};width:${barW(to - from)};top:${17 + row * 46}px" ${attrs}></cb-clip>`;
    let clips = clip(0, FIRST_BAR, 10, 'kind="groove" open-left')
      + clip(1, FIRST_BAR, 10, 'kind="chords" open-left')
      + clip(2, FIRST_BAR, 10, 'kind="bass" open-left')
      + clip(3, FIRST_BAR, 10.41, 'kind="boom" name="c - Drop 16_RD" gain="dB" open-left')
      + clip(4, 10, FIRST_BAR + BARS, 'kind="drums" name="Drums" open-right')
      + clip(5, 10, 14, 'kind="hats" px="514" name="Trap - Hi-Hat Loop 02_140bpm_BB" gain="-11.27 dB"')
      + clip(5, 14, 16, 'kind="hats" px="256" name="Trap - Hi-Hat Loop 02_140bpm_BB" gain="-11.27 dB"');
    for (let k = 0; k < 24; k++) {
      clips += clip(6, 10 + k / 4, 10.25 + k / 4, `kind="kick" short name="pd_K" ${k === 23 ? 'selected' : ''}`);
    }
    return `<div class="ruler">${ticks}</div><div class="lanes">${lines}${clips}</div><div class="cursor" style="left:${barX(10.687)}"></div>`;
  }
}
customElements.define('cb-arrange', CbArrange);

class CbProject extends Part {
  css() {
    return `
      :host { display: grid; grid-template-columns: 524px 2px minmax(0, 1fr) 12px; grid-template-rows: minmax(0, 1fr) 12px; padding: 4px 3px 4px 0;
        background: #24282b; border: 2px solid #fff; border-radius: 8px; min-height: 0; }
      cb-tracks, .split { grid-row: 1 / 3; }
      .split { background: #6f7173; }
      .side { display: flex; flex-direction: column; gap: 3px; color: #fff; min-height: 0; }
      .side cb-scroll { flex: 1; }
      .side > button, .bottom > button { background: #3f4144; width: 12px; height: 12px; }
      .side > .top { height: 22px; background: #4a4c4f; border: 1px solid #5e6063; border-radius: 3px; }
      .bottom { display: flex; gap: 3px; color: #fff; }
      .bottom cb-scroll { flex: 1; }
    `;
  }
  html() {
    return `
      <cb-tracks></cb-tracks><div class="split"></div>
      <cb-arrange></cb-arrange>
      <div class="side">
        <button type="button" class="top" aria-label="ルーラー設定">${icon('down', 10)}</button>
        <button type="button" aria-label="ゾーン編集">${icon('pencil', 9)}</button>
        <cb-zoom vertical bare value="76" label="波形ズーム"></cb-zoom>
        <cb-scroll vertical parts="2 176 0"></cb-scroll>
        <button type="button" aria-label="ズームプリセット">${icon('down', 9)}</button>
        <cb-zoom vertical value="2" label="縦ズーム"></cb-zoom>
      </div>
      <div class="bottom">
        <cb-scroll parts="19 28 862"></cb-scroll>
        <button type="button" aria-label="横ズームプリセット">${icon('down', 9)}</button>
        <cb-zoom value="56" label="横ズーム"></cb-zoom>
      </div>`;
  }
}
customElements.define('cb-project', CbProject);

// -- sample editor in the lower zone --
class CbEditor extends Part {
  css() {
    return `
      :host { display: grid; grid-template-columns: 40px minmax(0, 1fr) 12px; grid-template-rows: 39px 25px minmax(0, 1fr) 12px;
        padding: 0 6px 6px; background: #24282b; border: 2px solid #55575a; border-radius: 8px 8px 8px 8px; min-height: 0; }
      .bar { grid-column: 1 / 4; display: flex; justify-content: space-between; align-items: center; color: #dcddde; }
      .bar > div { display: flex; gap: 5px; align-items: center; }
      .bar > .mid { margin-left: 10px; }
      .mark { width: 5px; align-self: flex-start; display: flex; padding-top: 2px; }
      .far { margin-left: 5px; }
      .kick { margin-left: 15px; }
      .unit { display: flex; align-items: center; justify-content: flex-end; gap: 8px; background: #000; font-size: 10px; font-weight: 600; }
      .unit svg { color: #85878a; }
      .ruler { position: relative; overflow: hidden; background: #1b1c20; font-weight: 600; color: #f2f2f2; margin-right: 3px; }
      .ruler i { position: absolute; top: 0; width: 1px; height: 24px; background: #fff; }
      .ruler span { position: absolute; top: 9px; padding-left: 5px; }
      .ruler .start { position: absolute; left: 0; top: 0; border: 9px solid; border-width: 9px 9px 0 0; border-color: #fff transparent; }
      .scale { display: grid; grid-template-rows: 1fr 1fr; background: #1b1d20; font-size: 10px; line-height: 16px; text-align: right; }
      .scale div { display: flex; flex-direction: column; justify-content: space-between; padding-right: 5px; }
      .scale div + div { border-top: 1px solid #d0d2d4; }
      .wave { position: relative; overflow: hidden; background: #121315; margin-right: 3px; }
      .tag { position: absolute; height: 15px; line-height: 15px; font-size: 11px; background: #3f5a7c; color: #eef2f6; white-space: nowrap; }
      .from { left: 50px; top: 0; padding: 0 1px 0 2px; }
      .to { left: 0; width: 51px; top: 16px; text-align: right; padding-right: 2px; }
      .s { left: 50px; top: calc(50% - 8px); width: 15px; text-align: center; }
      .dots { position: absolute; left: 50px; top: 31px; bottom: 0; width: 2px; background: repeating-linear-gradient(#4a5d78 0 2px, transparent 2px 4px); }
      .cursor { position: relative; grid-area: 2 / 2 / 4 / 3; width: 1px; margin-left: 33px; background: #fff; z-index: 1; }
      .r { grid-area: 2 / 2; } .w { grid-area: 3 / 2; }
      .top { grid-area: 2 / 3; margin: 1px 0 2px; background: #4a4c4f; border: 1px solid #5e6063; border-radius: 3px; color: #fff; }
      .side { grid-area: 3 / 3; display: flex; flex-direction: column; gap: 3px; }
      .side cb-scroll { flex: 1; }
      .side cb-zoom { height: 80px; }
      .bottom { grid-area: 4 / 2; display: flex; gap: 3px; }
      .bottom cb-scroll { flex: 1; }
      .bottom cb-zoom { width: 80px; }
    `;
  }
  html() {
    let ticks = '';
    for (let k = 0; k < 29; k++) {
      const left = `${(k * 3.563).toFixed(3)}%`;
      ticks += `<i style="left:${left}"></i>`;
      if (k < 28) ticks += `<span style="left:${left}">${1 + k * 16}</span>`;
    }
    const col = ['0', '-6.0', '-oo', '-6.0', '0'].map((t) => `<span>${t}</span>`).join('');
    return `
      <div class="bar">
        <div><cb-group><cb-button icon="pin" label="固定"></cb-button></cb-group><cb-group><cb-button on icon="solo" label="エディターのソロ"></cb-button></cb-group></div>
        <div class="mid">
          <cb-group><cb-button icon="play" size="15" label="試聴"></cb-button><cb-button icon="loop" label="ループ"></cb-button></cb-group>
          <span class="mark">${icon('left', 9)}</span>
          <cb-group><cb-button on icon="scroll" label="自動スクロール"></cb-button><cb-button dark icon="down" size="11" label="スクロール設定"></cb-button></cb-group>
          <cb-group><cb-button on icon="range" label="範囲選択"></cb-button><cb-button icon="pencil" label="鉛筆"></cb-button><cb-button icon="zoom" label="ズーム"></cb-button><cb-button icon="audition" label="スクラブ"></cb-button><cb-button icon="speaker" label="再生"></cb-button></cb-group>
          <cb-group><cb-button icon="curve" label="ゼロクロスポイント"></cb-button><cb-button on icon="snap" label="スナップ"></cb-button></cb-group>
          <cb-group><cb-button icon="grid" size="14" label="グリッド"></cb-button><cb-select w="138" pad="6" value="小節" label="グリッドタイプ"></cb-select></cb-group>
          <cb-group><cb-button off icon="note" label="ミュージカルモード"></cb-button></cb-group>
          <cb-group field><cb-select w="75" pad="5" value="ズーム" label="ズームプリセット"></cb-select></cb-group>
          <cb-group field class="far"><cb-button icon="eye" label="表示"></cb-button><cb-button icon="down" size="11" label="表示設定"></cb-button></cb-group>
          <cb-group field class="kick"><cb-select w="125" pad="6" value="pd_Kick 12" label="編集中のクリップ"></cb-select></cb-group>
        </div>
        <div><cb-group><cb-button icon="open" size="14" label="別ウィンドウで開く"></cb-button><cb-button dark w="19" icon="setup" size="14" label="レイアウト設定"></cb-button></cb-group></div>
      </div>
      <div class="unit">db${icon('down', 8)}</div>
      <div class="ruler r">${ticks}<b class="start"></b></div>
      <button type="button" class="top" aria-label="ルーラー設定">${icon('down', 10)}</button>
      <div class="scale"><div>${col}</div><div>${col}</div></div>
      <div class="wave w"><div class="dots"></div><span class="tag from">イベント開始</span><span class="tag to">ベント終了</span><span class="tag s">S</span></div>
      <div class="cursor"></div>
      <div class="side"><cb-scroll vertical dim></cb-scroll><cb-zoom vertical value="2" label="縦ズーム"></cb-zoom></div>
      <div class="bottom"><cb-scroll parts="0 1402 4"></cb-scroll><cb-zoom value="4" label="横ズーム"></cb-zoom></div>`;
  }
}
customElements.define('cb-editor', CbEditor);

class CbLowerTabs extends Part {
  css() {
    return `
      :host { display: flex; align-items: flex-start; height: 25px; margin-top: -2px; position: relative; color: #d8dadc; font-size: 11px; font-weight: 600; }
      button { height: 25px; padding: 0; white-space: nowrap; }
      .close { width: 18px; }
      .mix { width: 108px; }
      .on { width: 84px; height: 23px; background: #24282b; border: 2px solid #55575a; border-top: 0; border-radius: 0 0 4px 4px; color: #fff; }
      .smp { width: 138px; } .pad { width: 94px; } .rem { width: 115px; }
    `;
  }
  html() {
    return `<button type="button" class="close" aria-label="下ゾーンを閉じる">${icon('x', 13)}</button>
      <button type="button" class="mix">MixConsole</button><button type="button" class="on">エディター</button>
      <button type="button" class="smp">サンプラーコントロール</button><button type="button" class="pad">コードパッド</button><button type="button" class="rem">MIDI Remote</button>`;
  }
}
customElements.define('cb-lower-tabs', CbLowerTabs);

// -- right zone --
class CbFilter extends Part {
  css() {
    return `
      :host { display: block; min-width: 0; --group-h: 19px; font-size: 11px; }
      .list { display: flex; height: 86px; margin-top: 2px; }
      ul { flex: 1; min-width: 0; height: 86px; overflow: hidden; margin: 0; padding: 0 0 0 2px; list-style: none; font-weight: 600; line-height: 19px; color: #f2f2f2; white-space: nowrap; }
      .bar { flex: none; width: 6px; margin: 1px 1px 0 0; border-radius: 3px; background: linear-gradient(#f2f2f4 30px, #505255 30px); }
    `;
  }
  html() {
    const items = this.attr('items').split(',');
    return `<cb-group field><cb-select fill pad="4" end="4" size="9" value="${this.attr('value')}" label="フィルター属性"></cb-select></cb-group>
      <div class="list"><ul>${items.map((t) => `<li>${t}</li>`).join('')}</ul>${this.hasAttribute('bar') ? '<div class="bar"></div>' : ''}</div>`;
  }
}
customElements.define('cb-filter', CbFilter);

class CbMedia extends Part {
  css() {
    return `
      :host { display: flex; flex-direction: column; min-height: 0; font-size: 11px; --group-h: 19px; }
      .tabs { display: flex; height: 24px; margin-bottom: -2px; position: relative; }
      .tabs button { width: 69px; font-weight: 600; font-size: 11px; }
      .tabs .on { width: 83px; background: #24282b; border: 2px solid #55575a; border-bottom: 0; border-radius: 4px 4px 0 0; color: #fff; }
      .panel { flex: 1; min-height: 0; display: flex; flex-direction: column; padding: 7px 7px 12px; background: #24282b; border: 2px solid #55575a; border-radius: 8px; color: #dcddde; }
      .row { display: flex; gap: 3px; }
      .find { --group-h: 20px; }
      .find label { flex: 1; min-width: 0; display: flex; align-items: center; gap: 4px; padding: 0 6px 0 4px; background: #17191c; border: 1px solid #595b5e; border-radius: 3px; }
      .find input { flex: 1; min-width: 0; width: 100%; font-size: 11px; color: #c4c6c8; }
      .path { align-items: center; gap: 7px; height: 31px; border-bottom: 1px solid #6a6c6e; }
      .path span { white-space: nowrap; }
      .path .home { display: flex; align-items: center; gap: 2px; }
      .path button { width: 20px; height: 20px; background: #33363a; border-radius: 3px; }
      .types { margin-top: 3px; }
      .types cb-group:first-child { width: 100px; font-size: 10px; }
      .filters { display: grid; grid-template-columns: 64px 64px 66px; gap: 6px; margin: 9px 2px 0; }
      .names { display: flex; flex: 1; min-height: 0; margin-top: 7px; }
      .list { flex: 1; overflow: hidden; height: 0; min-height: 100%; }
      table { width: 100%; border-collapse: separate; border-spacing: 0; table-layout: fixed; font-weight: 600; color: #f4f4f4; }
      col:first-child { width: 26px; }
      th { height: 18px; padding: 0 0 2px 4px; background: linear-gradient(#4b4c4e 16px, transparent 16px); font-weight: 400; text-align: left; line-height: 16px; }
      th span { display: flex; align-items: center; gap: 6px; }
      td { height: 19px; padding: 0; line-height: 18px; border-bottom: 1px solid #3a3d3f; }
      td:first-child { padding-left: 1px; }
      tr[aria-selected] td { background: #bfc0c2; color: #0a0b0c; }
      .vbar { width: 9px; padding-left: 1px; border-top: 16px solid #4b4c4e; }
      .vbar div { width: 6px; height: calc(100% - 3px); margin-top: 3px; border-radius: 3px; background: linear-gradient(#505255 101px, #f2f2f4 101px 131px, #505255 131px); }
      .hbar { flex: none; height: 6px; margin: 1px 9px 5px 1px; border-radius: 3px; background: linear-gradient(90deg, #f2f2f4 78px, #505255 78px); }
      .view { flex: none; height: 74px; padding: 6px 9px 0 5px; background: #15171a; border-radius: 5px; text-align: right; }
      .view text { font-size: 10px; fill: #dcddde; }
      .play { margin: 11px 5px 0; }
      .vol { width: 71px; align-items: center; gap: 4px; padding: 0 4px; }
      .vol svg { margin: 3px; }
      .vol input { appearance: none; flex: 1; min-width: 0; height: 10px; background: linear-gradient(90deg, #5fa9e6 72%, #3f4144 72%) center / 100% 5px no-repeat; }
      .vol input::-webkit-slider-thumb { appearance: none; width: 9px; height: 9px; border-radius: 50%; background: #d6d7d8; }
      .keys { margin: 12px 5px 0; justify-content: space-between; }
    `;
  }
  html() {
    const pd = Array.from({ length: 14 }, (_, i) => `pd_Kick ${String(20 - i).padStart(2, '0')}`);
    const files = ['PH_1_Kick2', 'PH_1_Kick1', ...[50, 49, 48, 47, 42, 28, 26].map((n) => `Percussive Hit ${n}_RT`), ...pd, ''];
    let wave = '';
    for (const cy of [9, 25]) {
      wave += `M0 ${cy}`;
      for (let i = 0, x = 1; x < 130; i++) {
        const a = 8 * Math.exp(-x / 46);
        wave += `L${x.toFixed(1)} ${(cy + (i % 2 ? a : -a)).toFixed(1)}`;
        x += 1.1 + x * 0.05;
      }
      wave += `L202 ${cy}`;
    }
    return `
      <div class="tabs"><button type="button">VSTi</button><button type="button" class="on">メディア</button></div>
      <div class="panel">
        <div class="row find"><label>${icon('search', 12)}<input type="text" value="kick" aria-label="検索">${icon('x', 10)}</label><cb-group><cb-button off icon="list" size="14" label="結果の表示"></cb-button></cb-group></div>
        <div class="row path"><button type="button" aria-label="戻る">${icon('back', 14)}</button><span class="home">${icon('home', 14)}${icon('right', 8)}</span><span>...</span>${icon('right', 8)}<span>すべての項目を表示</span></div>
        <div class="row types">
          <cb-group field><cb-select fill pad="4" end="4" size="9" value="すべてのメディアタ." label="メディアタイプ"></cb-select></cb-group>
          <cb-group><cb-button icon="rewind" size="12" label="フィルターをリセット"></cb-button></cb-group>
          <cb-group><cb-button icon="shuffle" size="13" label="シャッフル"></cb-button></cb-group>
          <cb-group field><cb-button icon="gear" size="12" label="設定"></cb-button></cb-group>
          <cb-group><cb-button on icon="panel" label="フィルター表示"></cb-button></cb-group>
        </div>
        <div class="filters">
          <cb-filter value="Sub Cat." items="Beats,Kick Drum,Percussion,Synth Bass"></cb-filter>
          <cb-filter value="Sub Sty." items="Alternative,Big Beats,Britpop,Classic House,Classic Rock" bar></cb-filter>
          <cb-filter value="Charact." items="Acoustic,Analog,Attack,Bright,Clean" bar></cb-filter>
        </div>
        <div class="names">
          <div class="list"><table>
            <colgroup><col><col></colgroup>
            <thead><tr><th scope="col" colspan="2"><span>${icon('sort', 8)}Name</span></th></tr></thead>
            <tbody>${files.map((n) => `<tr ${n === 'pd_Kick 12' ? 'aria-selected="true"' : ''}><td>${icon('wave', 15)}</td><td>${n}</td></tr>`).join('')}</tbody>
          </table></div>
          <div class="vbar"><div></div></div>
        </div>
        <div class="hbar"></div>
        <div class="view">
          <svg width="202" height="46" aria-hidden="true">
            <path d="M45.500 0v15m45-15v15m46-15v15m45-15v15" stroke="#4a4c4f"/>
            <path d="${wave}" fill="none" stroke="#e4e6e8" stroke-width="1.300"/><path d="M.5 0v45" stroke="#fff"/><path d="M0 0h9L0 9z" fill="#fff"/>
            <text x="5" y="41">0</text>
          </svg>pd_Kick 12</div>
        <div class="row play">
          <cb-group><cb-button icon="play" size="10" label="再生"></cb-button><cb-button on icon="stop" size="13" label="停止"></cb-button><cb-button icon="loop" size="14" label="ループ再生"></cb-button></cb-group>
          <cb-group field class="vol">${icon('ramp', 11)}<input type="range" min="0" max="100" value="76" aria-label="プレビューレベル"></cb-group>
          <cb-group><cb-button on icon="auto" size="12" label="自動再生"></cb-button><cb-button icon="beat" size="12" label="プロジェクトに同期"></cb-button></cb-group>
        </div>
        <div class="row keys">
          <cb-group field><cb-button label="ルートキー">-</cb-button><cb-select off w="38" pad="10" end="4" size="9" value="-" label="トランスポーズ"></cb-select></cb-group>
          <cb-group><cb-button icon="note8" size="11" label="音符"></cb-button><cb-button label="半分の速さ">1/2</cb-button><cb-button label="2倍の速さ">2x</cb-button><cb-button icon="tape" size="12" label="テープ"></cb-button></cb-group>
        </div>
      </div>`;
  }
}
customElements.define('cb-media', CbMedia);

// -- transport --
class CbTransport extends Part {
  css() {
    return `
      :host { display: flex; align-items: center; justify-content: space-between; height: 40px; padding: 0 6px 2px 4px; background: #24282b; color: #dcddde; }
      div { display: flex; align-items: center; gap: 4px; }
      .rec { gap: 5px; }
      .pos { width: 125px; padding-right: 7px; background: #17191c; text-align: right; font-size: 14px; line-height: 25px; white-space: pre; }
      .loc { margin-right: 6px; }
      .main { --group-h: 31px; --on-bg: #a3a7aa; margin-left: 3px; }
      .main cb-group { background: #626467; outline: 2px solid #b9bbbc; outline-offset: -2px; }
      .tempo { width: 62px; text-align: center; line-height: 25px; font-size: 12px; background: #17191c; }
      .spin { flex-direction: column; justify-content: center; gap: 3px; width: 19px; background: #17191c; }
      .sig { width: 50px; border-left: 1px solid #46484b; text-align: center; line-height: 25px; background: #17191c; }
      .end { gap: 3px; }
      .meter { width: 89px; height: 25px; margin-left: 2px; padding-right: 3px; justify-content: flex-end; background: linear-gradient(#595b5e, #595b5e) 25px 0 / 1px 100% no-repeat #17191c; border: 1px solid #595b5e; border-radius: 3px; }
      .meter i { width: 5px; height: 21px; background: #e01a12; }
      .aq { font-size: 14px; }
    `;
  }
  html() {
    const btn = (i, l, w, size = 18, on = '') => `<cb-button w="${w}" icon="${i}" size="${size}" label="${l}" ${on}></cb-button>`;
    return `
      <div class="rec">
        <cb-group><cb-button icon="clock" size="18" label="録音モード"></cb-button></cb-group>
        <cb-group field><cb-button icon="rec" size="17" label="共通録音モード"></cb-button><cb-button w="19" icon="down" size="11" label="録音モード一覧"></cb-button></cb-group><cb-grip></cb-grip>
        <cb-group field><cb-button icon="wave" size="17" label="オーディオ録音モード"></cb-button><cb-button w="19" icon="down" size="11" label="オーディオ録音一覧"></cb-button></cb-group><cb-grip></cb-grip>
        <cb-group field><cb-button w="23" icon="midi" size="15" label="MIDI 録音モード"></cb-button><cb-select w="89" pad="1" value="新規パート" label="MIDI 録音モード"></cb-select><cb-select w="99" pad="6" value="ミックス" label="MIDI サイクル録音モード"></cb-select></cb-group><cb-grip></cb-grip>
        <cb-group class="aq"><cb-button w="38" label="自動クオンタイズ">AQ</cb-button></cb-group>
      </div>
      <div>
        <cb-group class="loc"><cb-button icon="locL" size="13" label="左ロケーター"></cb-button><span class="pos">1.   1.   1.    0</span></cb-group>
        <cb-group><cb-button icon="locR" size="13" label="右ロケーター"></cb-button><span class="pos">1.   1.   1.    0</span></cb-group>
        <cb-group><cb-button icon="markL" size="12" label="パンチイン"></cb-button><cb-button icon="markR" size="12" label="パンチアウト"></cb-button></cb-group>
        <div class="main"><cb-group>${btn('prev', '前のマーカーへ', 38, 16)}${btn('next', '次のマーカーへ', 38, 16)}${btn('loopOpen', 'サイクル', 50)}${btn('stopOpen', '停止', 50, 15, 'on')}${btn('playOpen', '再生', 50, 17)}${btn('recOpen', '録音', 50, 16)}</cb-group></div>
        <cb-grip></cb-grip>
        <cb-group><cb-button w="38" icon="sync" label="同期"></cb-button></cb-group>
        <cb-group field><cb-button icon="note" size="14" label="表示形式"></cb-button><span class="pos">10.   3.   4.    1</span></cb-group><cb-grip></cb-grip>
        <cb-group><cb-button on icon="tempo" label="テンポトラック"></cb-button><span class="tempo">180.000</span><div class="spin">${icon('up', 9)}${icon('down', 9)}</div><span class="sig">4/4</span><cb-button w="51" label="タップテンポ">Tap</cb-button><cb-button dark icon="down" size="11" label="タップテンポ設定"></cb-button></cb-group><cb-grip></cb-grip>
      </div>
      <div class="end">
        <cb-group><cb-button w="22" icon="metro" size="15" label="メトロノーム"></cb-button><cb-button w="22" icon="gear" size="12" label="メトロノーム設定"></cb-button></cb-group><cb-grip></cb-grip>
        <div class="meter"><i></i></div><cb-grip></cb-grip>
      </div>`;
  }
}
customElements.define('cb-transport', CbTransport);

class CbApp extends Part {
  css() {
    return `
      :host { display: flex; flex-direction: column; height: 100vh; min-height: 960px; }
      main { flex: 1; display: grid; grid-template-columns: 84px minmax(0, 1fr) 235px; min-height: 0; padding: 5px 4px 0 5px; }
      cb-channel { margin: 0 6px 4px 0; }
      cb-media { margin: 0 0 4px 5px; }
      .centre { display: grid; grid-template-rows: minmax(0, 12fr) minmax(0, 11fr) 25px; min-height: 0; }
      cb-editor { margin-top: 4px; }
    `;
  }
  html() {
    return `
      <cb-title></cb-title><cb-menu></cb-menu><cb-toolbar></cb-toolbar><cb-status></cb-status><cb-info></cb-info><cb-overview></cb-overview>
      <main>
        <cb-channel></cb-channel>
        <div class="centre"><cb-project></cb-project><cb-editor></cb-editor><cb-lower-tabs></cb-lower-tabs></div>
        <cb-media></cb-media>
      </main>
      <cb-transport></cb-transport>`;
  }
}
customElements.define('cb-app', CbApp);
</script>
</body>
</html>
